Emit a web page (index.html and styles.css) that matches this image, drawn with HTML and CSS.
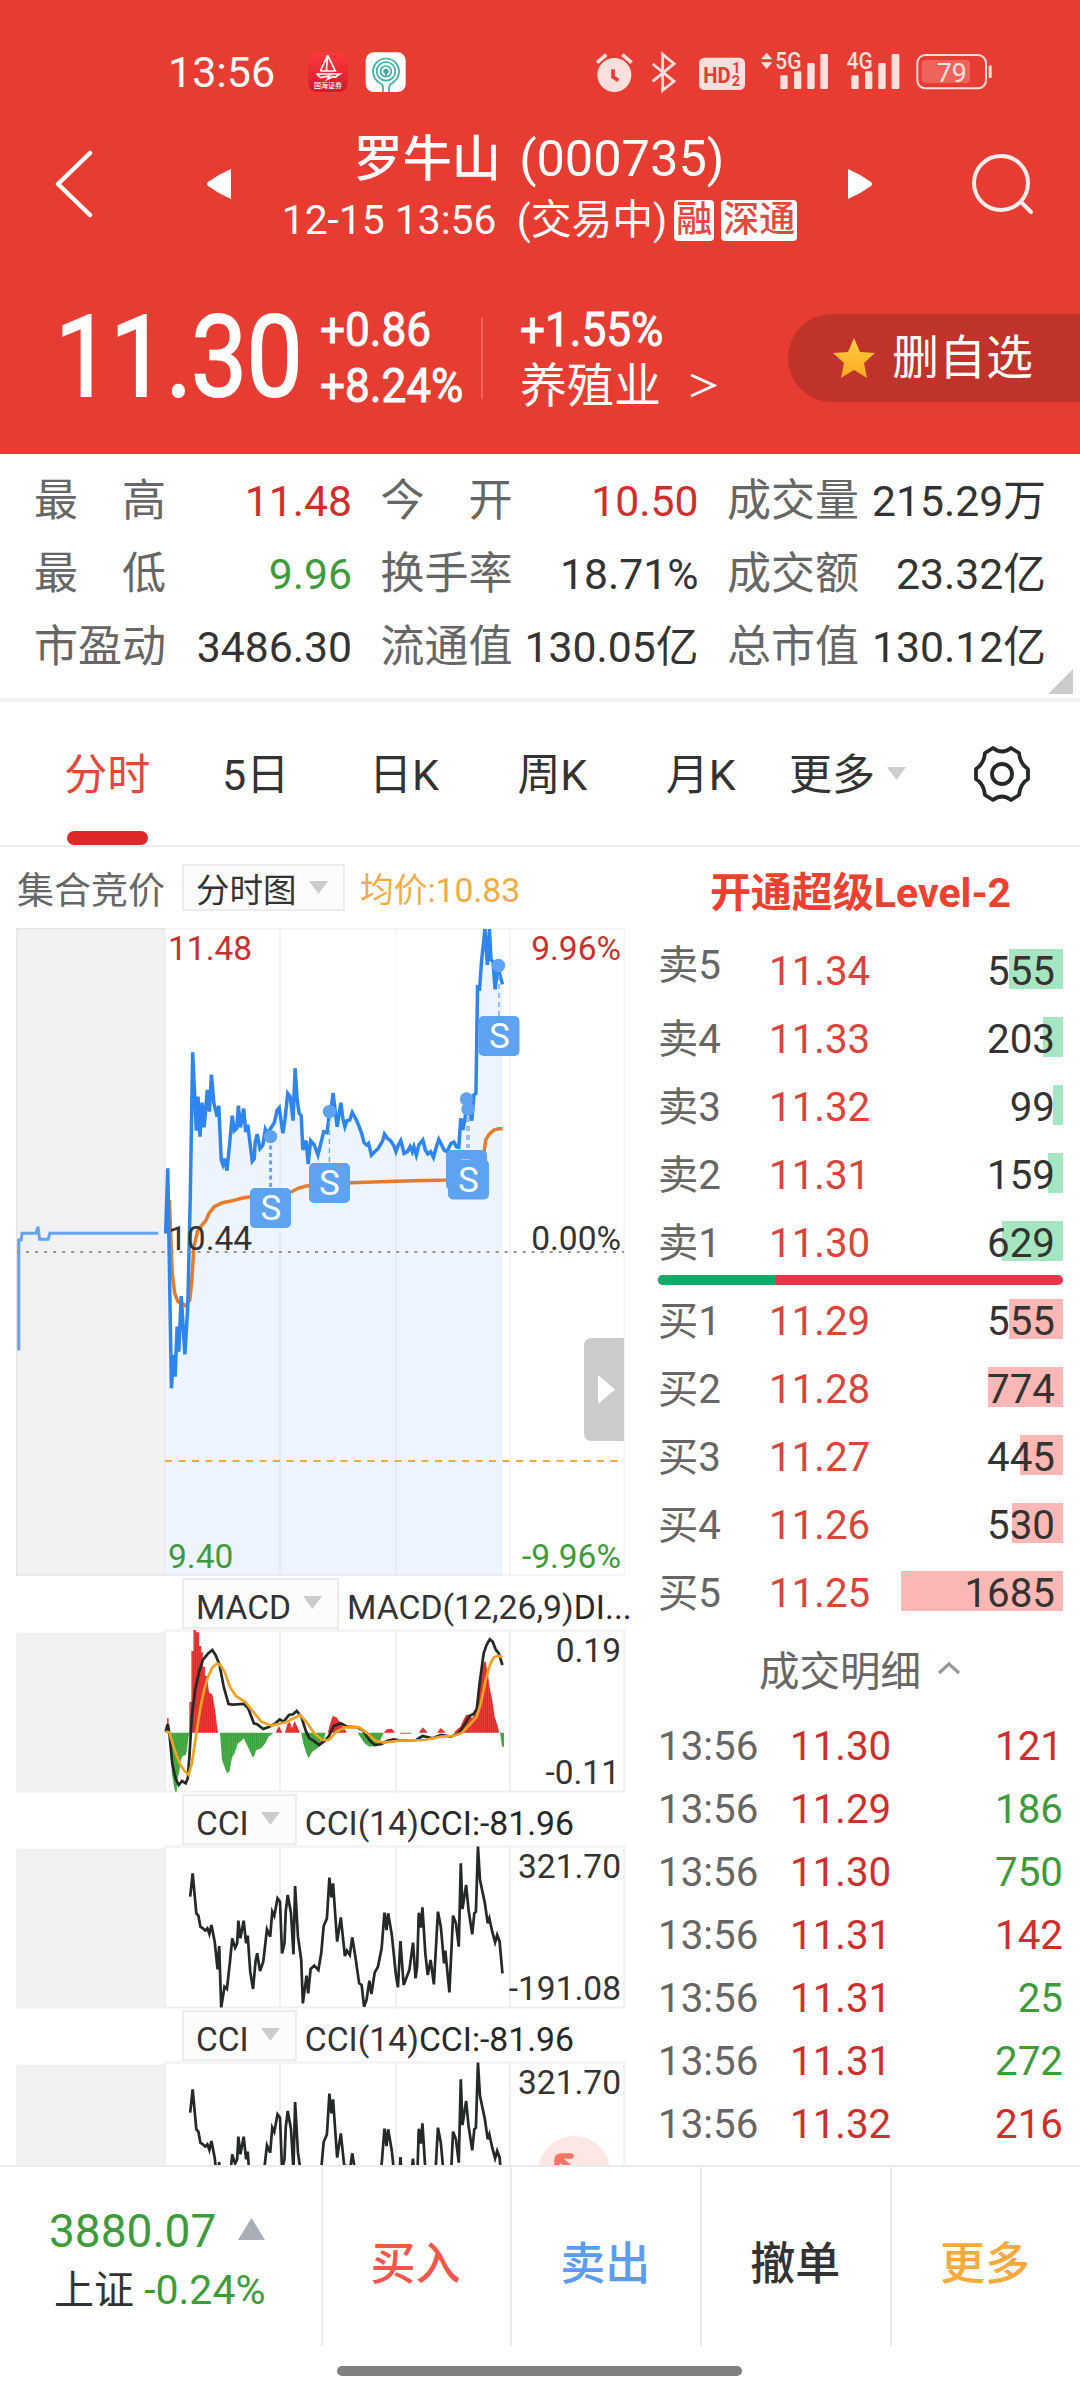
FILE: index.html
```html
<!DOCTYPE html>
<html lang="zh-CN">
<head>
<meta charset="utf-8">
<title>罗牛山 (000735)</title>
<link rel="stylesheet" href="styles.css">
</head>
<body>
<div class="screen">
  <header class="header">
    <div class="status">
      <span class="clock">13:56</span>
      <svg class="apps" viewBox="0 0 345 195" width="115" height="65">
        <defs><linearGradient id="app" x1="0" y1="0" x2="0" y2="1"><stop offset="0" stop-color="#fb3a3c"/><stop offset="1" stop-color="#d8182c"/></linearGradient></defs>
        <rect x="25" y="37" width="118" height="119" rx="26" fill="url(#app)"/>
        <g fill="none" stroke="#fff" stroke-width="5"><path d="M83 46L61 93M83 46L106 93H61M83 46L79 93M48 102H120L108 110M52 104L62 113L88 108L82 118L98 110L110 112"/></g>
        <text x="84" y="145" text-anchor="middle" class="app-name">国海证券</text>
        <rect x="197" y="37" width="120" height="119" rx="24" fill="#fff"/>
        <g fill="none" stroke="#37b0a4" stroke-width="5"><path d="M249 156V142Q249 134 238 128A39 39 0 1 1 278 128Q267 134 267 142V156"/><circle cx="258" cy="94" r="28"/><circle cx="258" cy="94" r="16"/><path d="M258 100V111"/></g>
        <circle cx="258" cy="94" r="8" fill="#37b0a4"/>
      </svg>
      <svg class="signals" viewBox="0 0 1260 195" width="420" height="65">
        <g fill="#fde0de">
          <circle cx="88" cy="105" r="51"/>
          <rect x="342" y="53" width="138" height="97" rx="16"/>
          <path d="M528 58L545 38L562 58zM528 67L545 87L562 67z"/>
          <rect x="586" y="106" width="22" height="41" rx="4"/><rect x="627" y="94" width="22" height="53" rx="4"/><rect x="667" y="69" width="22" height="78" rx="4"/><rect x="706" y="42" width="23" height="105" rx="4"/>
          <rect x="799" y="106" width="22" height="41" rx="4"/><rect x="840" y="94" width="22" height="53" rx="4"/><rect x="880" y="69" width="22" height="78" rx="4"/><rect x="920" y="42" width="23" height="105" rx="4"/>
          <rect x="1211" y="76" width="9" height="38" rx="4"/>
        </g>
        <g fill="none" stroke="#fde0de">
          <path d="M36 68L64 44M140 68L112 44" stroke-width="11"/>
          <path d="M203 72L267 124L233 151V43L267 71L203 124" stroke-width="8.500"/>
          <rect x="997" y="45" width="206" height="100" rx="24" stroke-width="6"/>
        </g>
        <rect x="1010" y="60" width="145" height="69" rx="12" fill="#ee645b"/>
        <path d="M84 88V111L100 121" fill="none" stroke="#e63c32" stroke-width="11"/>
        <g class="sig-text">
          <text x="355" y="129" textLength="82" lengthAdjust="spacingAndGlyphs" class="hd">HD</text>
          <text x="442" y="98" class="hd-num">1</text><text x="440" y="138" class="hd-num">2</text>
          <text x="571" y="88" textLength="78" lengthAdjust="spacingAndGlyphs" class="net">5G</text>
          <text x="785" y="88" textLength="78" lengthAdjust="spacingAndGlyphs" class="net">4G</text>
          <text x="1055" y="125" class="battery">79</text>
        </g>
      </svg>
    </div>
    <div class="nav">
      <svg class="back" viewBox="0 0 40 68" width="40" height="68"><path d="M37 3L5 34L37 65" fill="none" stroke="#fff" stroke-width="4.5" stroke-linecap="round" stroke-linejoin="round"/></svg>
      <svg class="prev" viewBox="0 0 26 32" width="26" height="32"><path d="M25 1V31Q13 26 2 18Q0 16 2 14Q13 6 25 1z" fill="#fff"/></svg>
      <div class="title">
        <div class="name"><b>罗牛山</b> (000735)</div>
        <div class="sub"><span>12-15 13:56&nbsp; (交易中)</span><i>融</i><i>深通</i></div>
      </div>
      <svg class="next" viewBox="0 0 26 32" width="26" height="32"><path d="M1 1V31Q13 26 24 18Q26 16 24 14Q13 6 1 1z" fill="#fff"/></svg>
      <svg class="search" viewBox="0 0 64 64" width="64" height="64"><g fill="none" stroke="#fff" stroke-opacity=".9" stroke-width="4" stroke-linecap="round"><circle cx="30" cy="31" r="27"/><path d="M50 50L60 60"/></g></svg>
    </div>
    <div class="quote">
      <div class="price"><span>11.30</span></div>
      <div class="delta"><span>+0.86</span><span>+8.24%</span></div>
      <div class="sector"><span class="narrow">+1.55%</span><span>养殖业</span></div>
      <svg class="chev" viewBox="0 0 28 28" width="28" height="28"><path d="M2 3L25 13.500L2 24" fill="none" stroke="#fff" stroke-width="3"/></svg>
      <div class="fav">
        <svg viewBox="0 0 44 42" width="44" height="42"><defs><linearGradient id="star" x1="0" y1="0" x2="0" y2="1"><stop offset="0" stop-color="#fdd045"/><stop offset="1" stop-color="#fca81e"/></linearGradient></defs><path d="M22 1L28 15L43 16L32 26L35 41L22 33L9 41L12 26L1 16L16 15z" fill="url(#star)"/></svg>
        <span>删自选</span>
      </div>
    </div>
  </header>

  <section class="stats">
    <div class="stat"><span class="spread"><i>最</i><i>高</i></span><b class="red">11.48</b></div>
    <div class="stat"><span class="spread"><i>今</i><i>开</i></span><b class="red">10.50</b></div>
    <div class="stat"><span>成交量</span><b>215.29万</b></div>
    <div class="stat"><span class="spread"><i>最</i><i>低</i></span><b class="green">9.96</b></div>
    <div class="stat"><span>换手率</span><b>18.71%</b></div>
    <div class="stat"><span>成交额</span><b>23.32亿</b></div>
    <div class="stat"><span>市盈动</span><b>3486.30</b></div>
    <div class="stat"><span>流通值</span><b>130.05亿</b></div>
    <div class="stat"><span>总市值</span><b>130.12亿</b></div>
    <svg class="corner" viewBox="0 0 26 26" width="26" height="26"><path d="M25 0V25H0z" fill="#ccc"/></svg>
  </section>

  <nav class="tabs">
    <span class="tab active">分时</span><span class="tab">5日</span><span class="tab">日K</span><span class="tab">周K</span><span class="tab">月K</span>
    <span class="tab more">更多<svg viewBox="0 0 19 13" width="19" height="13"><path d="M0 0H19L9.500 13z" fill="#ccc"/></svg></span>
    <svg class="gear" viewBox="0 0 58 58" width="58" height="58"><g fill="none" stroke="#262828" stroke-width="3.800" stroke-linejoin="round"><path d="M20 3Q29 10 38 3L46 8Q47 19 55 24V34Q47 39 46 50L38 55Q29 48 20 55L12 50Q11 39 3 34V24Q11 19 12 8z"/><circle cx="29" cy="29" r="10"/></g></svg>
  </nav>

  <main class="main">
    <div class="charts">
      <div class="chart-head">
        <span class="auction">集合竞价</span>
        <span class="select">分时图<svg viewBox="0 0 19 13" width="19" height="13"><path d="M0 0H19L9.500 13z" fill="#ccc"/></svg></span>
        <span class="avg">均价:10.83</span>
      </div>
      <div class="pane price-pane">
        <svg viewBox="0 0 610 648" width="610" height="648">
          <rect x="0" y="0" width="149" height="648" fill="#f1f1f1"/>
          <g transform="translate(-16 -78) scale(.408163 .333333)">
            <path d="M406 1150L411 955L420 1615L425 1515L429 1580L434 1430L438 1505L444 1338L453 1513L460 1370L466 1050L472 607L481 842L485 740L490 860L495 758L500 832L508 720L513 785L518 674L524 760L532 800L536 767L542 930L546 944L550 926L556 962L563 875L569 797L574 842L580 835L584 767L589 832L597 776L602 846L607 824L618 934L623 926L625 880L630 852L637 896L644 885L650 838L655 850L667 828L672 818L679 780L684 773L693 850L698 810L705 730L711 740L718 812L723 655L728 750L733 790L738 797L742 900L750 872L755 942L761 872L770 885L779 915L787 875L793 845L801 848L807 790L812 770L816 730L826 830L835 758L840 805L845 830L850 812L857 810L863 787L874 812L880 830L886 850L892 878L898 885L903 880L910 915L920 903L926 896L933 882L938 870L942 852L950 866L957 872L964 885L970 905L976 885L982 872L990 910L998 905L1005 890L1010 905L1014 890L1020 915L1026 885L1036 870L1042 900L1048 912L1055 905L1062 922L1068 895L1075 868L1082 885L1088 900L1095 905L1105 880L1112 876L1118 890L1124 892L1129 805L1134 840L1140 800L1143 750L1150 780L1156 812L1161 735L1166 730L1170 412L1175 415L1180 330L1185 275L1188 237L1194 345L1199 237L1203 330L1208 335L1213 418L1220 345L1224 370L1231 403V2177H406z" fill="#edf4fe"/>
            <g class="plot">
              <polyline stroke="#e87b28" stroke-width="3.500" points="408,1150 415,1050 422,1270 428,1330 436,1355 445,1360 455,1368 465,1350 470,1290 475,1190 485,1140 492,1130 505,1110 512,1090 525,1070 545,1058 570,1052 595,1044 625,1038 690,1032 715,1025 730,1015 750,1008 800,1003 860,998 970,994 1095,990 1150,985 1180,960 1186,905 1190,870 1198,853 1210,840 1222,836 1231,836"/>
              <polyline stroke="#2e85ee" stroke-width="3.500" points="406,1150 411,955 420,1615 425,1515 429,1580 434,1430 438,1505 444,1338 453,1513 460,1370 466,1050 472,607 481,842 485,740 490,860 495,758 500,832 508,720 513,785 518,674 524,760 532,800 536,767 542,930 546,944 550,926 556,962 563,875 569,797 574,842 580,835 584,767 589,832 597,776 602,846 607,824 618,934 623,926 625,880 630,852 637,896 644,885 650,838 655,850 667,828 672,818 679,780 684,773 693,850 698,810 705,730 711,740 718,812 723,655 728,750 733,790 738,797 742,900 750,872 755,942 761,872 770,885 779,915 787,875 793,845 801,848 807,790 812,770 816,730 826,830 835,758 840,805 845,830 850,812 857,810 863,787 874,812 880,830 886,850 892,878 898,885 903,880 910,915 920,903 926,896 933,882 938,870 942,852 950,866 957,872 964,885 970,905 976,885 982,872 990,910 998,905 1005,890 1010,905 1014,890 1020,915 1026,885 1036,870 1042,900 1048,912 1055,905 1062,922 1068,895 1075,868 1082,885 1088,900 1095,905 1105,880 1112,876 1118,890 1124,892 1129,805 1134,840 1140,800 1143,750 1150,780 1156,812 1161,735 1166,730 1170,412 1175,415 1180,330 1185,275 1188,237 1194,345 1199,237 1203,330 1208,335 1213,418 1220,345 1224,370 1231,403"/>
              <polyline stroke="#64a3ef" stroke-width="3" points="43,1497 46,1497 46,1170 52,1170 54,1150 88,1150 93,1130 97,1168 118,1168 122,1150 388,1150"/>
            </g>
          </g>
          <g fill="none" stroke="#2f3a50" stroke-opacity=".06" stroke-width="1.500"><path d="M.700 .700H608.300V647H.700zM149 0V648M264 0V648M380 0V648M494 0V648"/></g>
          <path d="M1 324H608" stroke="#949494" stroke-width="2" stroke-dasharray="3 6.030"/>
          <path d="M149 533H608" stroke="#f5a83c" stroke-width="2" stroke-dasharray="7 6.500"/>
          <g stroke="#64a3ef" stroke-width="1.300" stroke-dasharray="5 4"><path d="M313.400 184V235M451 171V220M453 180V220M483 38V88"/><path d="M254.600 210V260" stroke-width="3" stroke-dasharray="4 3.500"/></g>
          <g fill="#5ea2f2">
            <circle cx="254.600" cy="208.600" r="6.700"/><circle cx="313.400" cy="183.600" r="6.700"/><circle cx="450.500" cy="171" r="6.700"/><circle cx="452" cy="181" r="6.700"/><circle cx="482.500" cy="37.500" r="6.700"/>
            <rect x="234" y="260" width="41" height="40" rx="5"/><rect x="293" y="235" width="41" height="40" rx="5"/><rect x="430" y="222" width="41" height="40" rx="5"/><rect x="432" y="231.500" width="41" height="40" rx="5"/><rect x="462.500" y="88" width="41" height="40" rx="5"/>
          </g>
          <path d="M445 231.500H454" stroke="#a5c9f8" stroke-width="1"/>
          <g class="mark"><text x="254.800" y="292">S</text><text x="313.500" y="267">S</text><text x="452.500" y="264">S</text><text x="483.300" y="120">S</text></g>
          <g class="axis"><text x="152" y="32" fill="#c9302c">11.48</text><text x="152" y="322">10.44</text><text x="152" y="640" fill="#3e9b3c">9.40</text></g>
          <g class="axis end"><text x="605" y="32" fill="#c9302c">9.96%</text><text x="605" y="322">0.00%</text><text x="605" y="640" fill="#3e9b3c">-9.96%</text></g>
          <path d="M608 410H576Q568 410 568 418V505Q568 513 576 513H608z" fill="#cbcbcb"/>
          <path d="M582 447L599 461.500L582 476z" fill="#fff"/>
        </svg>
      </div>

      <div class="ind-head"><span class="select">MACD<svg viewBox="0 0 19 13" width="19" height="13"><path d="M0 0H19L9.500 13z" fill="#ccc"/></svg></span><span class="ind-text">MACD(12,26,9)<b>DI...</b></span></div>
      <div class="pane">
        <svg viewBox="0 0 610 164" width="610" height="164">
          <defs>
            <pattern id="rise" width="4.680" height="20" patternUnits="userSpaceOnUse"><rect width="4.680" height="20" fill="#ee5550"/><rect width="3.200" height="20" fill="#e02222"/></pattern>
            <pattern id="fall" width="4.680" height="20" patternUnits="userSpaceOnUse"><rect width="4.680" height="20" fill="#6ab868"/><rect width="3.200" height="20" fill="#31a031"/></pattern>
          </defs>
          <rect x="0" y="4" width="149" height="159" fill="#f1f1f1"/>
          <path class="grid" d="M149 1.500H608.300V162.500H0V4.700H149M149 0V164M264 0V164M380 0V164M494 0V164"/>
          <g transform="translate(-16 -59) scale(.408163 .333333)">
            <path fill="url(#rise)" d="M409 488V445H413V488zM464 488V395H469V243H474V180H480V187H488V228H493V247H497V290H502V318H507L512 368L520 372L525 405L529 437L532 475L535 488zM675 488L683 468L692 488zM698 488L704 462L710 455L715 475L722 452L728 470L735 488zM803 488L808 465L815 438L824 442L832 455L840 470L850 488zM940 488L948 478L960 476L968 488zM1026 488L1036 472L1048 488zM1070 488L1080 474L1092 488zM1112 488L1120 478L1128 470L1135 450L1142 435H1150L1157 445L1163 430L1168 400L1173 360L1178 310L1186 275H1190L1196 318L1200 355L1206 390L1212 440L1218 462L1222 482L1224 488z"/>
            <path fill="url(#fall)" d="M414 488L418 545L421 610L425 640L429 665H433L434 635L440 600L442 575L447 558L455 555L458 540L462 500L466 488zM539 488L544 570L550 590L556 610L562 605L568 565L575 548L583 520L592 512L597 505L603 520L611 540L618 560H622L628 540L640 535L650 520L658 500L670 488zM738 488L743 520L750 548L756 565L765 545L778 535L790 520L798 488zM876 488L885 505L893 520L905 530L918 528L930 515L940 488zM980 488V491H1008V488zM1225 488L1227 505L1230 530H1235V488z"/>
            <g class="plot">
              <polyline stroke="#262828" stroke-width="2.700" points="406,485 411,462 415,490 422,580 430,625 438,645 446,633 455,640 460,625 464,560 470,440 478,360 488,305 497,270 510,250 520,240 528,255 538,285 548,350 560,402 570,404 598,402 608,415 622,460 630,463 645,477 660,470 675,460 685,448 695,455 708,435 718,433 727,423 738,440 750,485 758,505 768,512 782,525 795,513 805,500 818,468 835,460 850,470 875,472 890,482 905,510 918,525 935,522 950,512 965,508 980,512 1020,510 1035,498 1060,505 1080,495 1105,500 1125,488 1140,460 1150,438 1160,432 1168,418 1175,340 1185,250 1192,225 1200,208 1207,215 1215,240 1222,250 1231,285"/>
              <polyline stroke="#eda224" stroke-width="2.700" points="406,485 415,487 425,530 440,580 450,600 462,615 470,580 480,500 490,420 500,360 510,320 520,293 532,280 540,285 550,305 563,350 578,378 602,397 620,425 640,455 665,467 700,457 735,435 750,455 770,490 790,510 805,510 825,485 845,472 880,472 900,490 920,512 940,518 980,512 1040,510 1080,500 1110,498 1130,490 1150,465 1168,440 1178,400 1190,330 1200,285 1210,262 1220,257 1231,262"/>
            </g>
          </g>
          <g class="axis end"><text x="605" y="33">0.19</text><text x="604" y="155">-0.11</text></g>
        </svg>
      </div>

      <div class="ind-head"><span class="select">CCI<svg viewBox="0 0 19 13" width="19" height="13"><path d="M0 0H19L9.500 13z" fill="#ccc"/></svg></span><span class="ind-text">CCI(14)<b>CCI:-81.96</b></span></div>
      <div class="pane">
        <svg viewBox="0 0 610 164" width="610" height="164">
          <defs>
            <g id="cci">
              <rect x="0" y="4" width="149" height="159" fill="#f1f1f1"/>
              <path class="grid" d="M149 1.500H608.300V162.500H0V4.700H149M149 0V164M264 0V164M380 0V164M494 0V164"/>
              <g class="plot" transform="translate(-16 -25) scale(.408163 .333333)">
                <polyline stroke="#262828" stroke-width="2.700" points="466,230 472,160 481,280 486,287 491,320 497,325 503,332 508,325 513,342 518,315 526,365 533,448 537,378 542,562 550,500 556,507 563,430 569,355 576,383 581,370 584,302 589,355 597,302 603,370 607,347 613,455 620,507 626,425 630,400 637,453 645,425 654,328 662,350 667,275 672,288 680,235 686,245 691,400 697,370 700,275 705,225 713,280 719,403 723,198 730,350 738,420 742,550 751,467 755,520 761,447 770,437 780,450 787,400 793,318 801,295 807,173 812,232 816,190 826,365 835,292 845,408 850,392 857,405 863,352 870,405 880,490 886,495 892,560 898,540 905,482 910,522 918,458 926,440 935,385 942,278 947,330 951,280 960,345 970,465 975,502 981,363 989,495 1003,450 1012,368 1018,475 1022,440 1026,278 1031,323 1035,262 1042,400 1048,465 1055,420 1063,493 1073,275 1080,320 1088,430 1091,392 1101,517 1110,287 1117,310 1124,380 1129,130 1133,267 1142,195 1148,270 1157,343 1162,280 1166,275 1171,80 1176,180 1188,250 1195,310 1199,295 1206,335 1213,367 1218,345 1224,365 1231,460"/>
              </g>
            </g>
          </defs>
          <use href="#cci"/>
          <g class="axis end"><text x="605" y="33">321.70</text><text x="605" y="155">-191.08</text></g>
        </svg>
      </div>

      <div class="ind-head"><span class="select">CCI<svg viewBox="0 0 19 13" width="19" height="13"><path d="M0 0H19L9.500 13z" fill="#ccc"/></svg></span><span class="ind-text">CCI(14)<b>CCI:-81.96</b></span></div>
      <div class="pane">
        <svg viewBox="0 0 610 104" width="610" height="104">
          <use href="#cci"/>
          <g class="axis end"><text x="605" y="33">321.70</text></g>
          <circle cx="558" cy="111" r="36" fill="#fde7e4"/>
          <path d="M541 107V99Q541 95 545 95H555M546 100L556 108" fill="none" stroke="#fb7468" stroke-width="5.500" stroke-linecap="round"/>
        </svg>
      </div>
    </div>

    <aside class="book">
      <div class="level2">开通超级Level-2</div>
      <div class="depth sell">
        <div class="lv"><span>卖5</span><b>11.34</b><em>555<i style="width:54px"></i></em></div>
        <div class="lv"><span>卖4</span><b>11.33</b><em>203<i style="width:20px"></i></em></div>
        <div class="lv"><span>卖3</span><b>11.32</b><em>99<i style="width:10px"></i></em></div>
        <div class="lv"><span>卖2</span><b>11.31</b><em>159<i style="width:15px"></i></em></div>
        <div class="lv"><span>卖1</span><b>11.30</b><em>629<i style="width:61px"></i></em></div>
      </div>
      <div class="ratio"><i style="width:29.200%"></i></div>
      <div class="depth buy">
        <div class="lv"><span>买1</span><b>11.29</b><em>555<i style="width:54px"></i></em></div>
        <div class="lv"><span>买2</span><b>11.28</b><em>774<i style="width:75px"></i></em></div>
        <div class="lv"><span>买3</span><b>11.27</b><em>445<i style="width:43px"></i></em></div>
        <div class="lv"><span>买4</span><b>11.26</b><em>530<i style="width:51px"></i></em></div>
        <div class="lv"><span>买5</span><b>11.25</b><em>1685<i style="width:162px"></i></em></div>
      </div>
      <div class="detail">成交明细<svg viewBox="0 0 24 16" width="24" height="16"><path d="M2 13L12 4L22 13" fill="none" stroke="#999" stroke-width="3.200"/></svg></div>
      <div class="trade"><span>13:56</span><b>11.30</b><em class="red">121</em></div>
      <div class="trade"><span>13:56</span><b>11.29</b><em class="green">186</em></div>
      <div class="trade"><span>13:56</span><b>11.30</b><em class="green">750</em></div>
      <div class="trade"><span>13:56</span><b>11.31</b><em class="red">142</em></div>
      <div class="trade"><span>13:56</span><b>11.31</b><em class="green">25</em></div>
      <div class="trade"><span>13:56</span><b>11.31</b><em class="green">272</em></div>
      <div class="trade"><span>13:56</span><b>11.32</b><em class="red">216</em></div>
    </aside>
  </main>

  <footer class="footer">
    <div class="actions">
      <div class="index">
        <div class="idx-top">3880.07<svg viewBox="0 0 27 22" width="27" height="22"><path d="M13.500 0L27 22H0z" fill="#a9adb5"/></svg></div>
        <div class="idx-sub"><span>上证</span> -0.24%</div>
      </div>
      <div class="act buy-act">买入</div>
      <div class="act sell-act">卖出</div>
      <div class="act">撤单</div>
      <div class="act more-act">更多</div>
    </div>
    <div class="home"></div>
  </footer>
</div>
</body>
</html>
```
FILE: styles.css
```css
* { box-sizing: border-box; }
body { margin: 0; background: #fff; font-family: Roboto, "Noto Sans CJK SC", sans-serif; color: #333; }
b, i, em { font-weight: 400; font-style: normal; }
svg { display: block; flex: none; overflow: hidden; }
.screen { width: 1080px; height: 2400px; overflow: hidden; display: flex; flex-direction: column; }
.red { color: #cf2e2c; }
.green { color: #3e9b3c; }

/* header */
.header { height: 454px; background: #e63c32; color: #fff; flex: none; }
.status { height: 105px; padding: 40px 0 0 168px; display: flex; align-items: center; }
.clock { width: 132px; font-size: 43px; line-height: 65px; }
.apps { margin-right: 170px; }
.app-name { font-size: 21px; fill: #fff; font-weight: 500; }
.sig-text { font-family: Roboto, sans-serif; fill: #fde0de; }
.sig-text .hd { font-size: 68px; font-weight: 700; fill: #e63c32; }
.sig-text .hd-num { font-size: 43px; font-weight: 700; fill: #e63c32; }
.sig-text .net { font-size: 70px; font-weight: 500; }
.sig-text .battery { font-size: 80px; }
.nav { height: 145px; display: flex; }
.back { margin: 45px 0 0 53px; }
.prev { margin: 63px 0 0 113px; }
.title { width: 614px; margin-top: 22px; display: flex; flex-direction: column; align-items: center; white-space: nowrap; }
.name { font-size: 50.500px; line-height: 63px; word-spacing: 6px; }
.name b { font-weight: 500; font-size: 49px; }
.sub { font-size: 40.800px; line-height: 58px; display: flex; align-items: center; padding-left: 1px; }
.sub i { background: #fff; color: #e04a40; font-size: 36px; font-weight: 500; line-height: 41px; height: 41px; border-radius: 4px; padding: 0 2px; margin-left: 7px; }
.next { margin: 63px 0 0 1px; }
.search { margin: 47px 0 0 98px; }
.quote { height: 204px; padding: 12px 0 0 55px; display: flex; align-items: center; }
.price { width: 265px; font-size: 113px; -webkit-text-stroke: 2px #fff; line-height: 120px; }
.price span, .delta span, .narrow { display: block; transform-origin: 0 50%; white-space: nowrap; }
.price span { transform: scaleX(.885); letter-spacing: -1px; }
.delta { width: 163px; height: 81px; border-right: 2px solid #ec645b; display: flex; flex-direction: column; justify-content: center; font-size: 49px; line-height: 56px; -webkit-text-stroke: 1px #fff; }
.delta span, .narrow { transform: scaleX(.9); }
.sector { width: 164px; margin-left: 37px; font-size: 47px; line-height: 56px; }
.narrow { font-size: 49px; -webkit-text-stroke: 1px #fff; }
.chev { margin: 56px 0 0 5px; }
.fav { margin-left: auto; width: 292px; height: 88px; border-radius: 44px 0 0 44px; background: #c0332b; display: flex; align-items: center; padding-left: 44px; gap: 16px; font-size: 47px; line-height: 88px; }

/* key figures */
.stats { position: relative; height: 248px; flex: none; border-bottom: 4px solid #f0f0f0; padding: 11px 34px 0 34px; display: grid; grid-template-columns: 318px 318px 319px; column-gap: 28.500px; grid-auto-rows: 73px; font-size: 42.700px; line-height: 73px; white-space: nowrap; }
.stat { display: flex; justify-content: space-between; }
.stat span { width: 132px; font-size: 44px; color: #666; }
.spread { display: flex; justify-content: space-between; }
.corner { position: absolute; right: 6px; bottom: 3px; }

/* period tabs */
.tabs { height: 145px; flex: none; border-bottom: 2px solid #ececec; padding-left: 33px; display: flex; align-items: center; font-size: 43px; }
.tab { position: relative; width: 148.400px; height: 143px; line-height: 147px; text-align: center; }
.tab.active { color: #e2473c; }
.tab.active::after { content: ""; position: absolute; left: 34px; bottom: 0; width: 81px; height: 14px; border-radius: 7px; background: #e0282a; }
.tab.more { width: 178px; margin-left: 4px; padding: 4px 0 0 10px; display: flex; align-items: center; gap: 12px; }
.more svg { margin-top: -4px; }
.gear { margin-left: 16px; }

/* charts */
.main { height: 1318px; flex: none; display: flex; overflow: hidden; }
.charts { width: 640px; flex: none; }
.chart-head { height: 81px; padding: 0 0 0 17px; display: flex; align-items: center; font-size: 34px; white-space: nowrap; }
.auction { width: 165px; font-size: 37px; color: #666; }
.select { height: 47px; border: 2px solid #ececec; background: #fcfcfc; display: flex; align-items: center; padding: 0 15px 0 12px; font-size: 33.500px; }
.select svg { margin-left: 12px; }
.chart-head .select { width: 163px; }
.avg { margin-left: 15px; color: #f1ab48; font-size: 33.700px; }
.pane { height: 164px; padding-left: 16px; }
.price-pane { height: 649px; }
.pane svg { font-family: Roboto, sans-serif; }
.plot polyline { fill: none; vector-effect: non-scaling-stroke; }
.grid { fill: none; stroke: #f0f0f0; stroke-width: 2; }
.axis { font-size: 33.500px; fill: #333; }
.end { text-anchor: end; }
.mark { font-size: 35px; fill: #fff; text-anchor: middle; }
.ind-head { height: 52px; padding-left: 182px; display: flex; align-items: center; font-size: 33.700px; white-space: nowrap; }
.ind-head .select { height: 51px; padding-top: 8px; }
.ind-head .select svg { margin-top: -10px; }
.ind-text { margin-left: 8px; padding-top: 8px; }
.ind-text b { color: #262626; }

/* order book */
.book { width: 440px; padding: 0 17px 0 18px; font-size: 40.300px; white-space: nowrap; }
.level2 { height: 90px; line-height: 92px; text-align: center; font-weight: 700; font-size: 41px; color: #ee4030; }
.lv { height: 68px; line-height: 70px; display: grid; grid-template-columns: 111px 120px 1fr; }
.lv span { color: #666; }
.sell .lv:first-child span { margin-top: -6px; }
.lv b { color: #d8453a; }
.lv em { position: relative; text-align: right; padding-right: 8px; z-index: 0; }
.lv em i { position: absolute; z-index: -1; right: 0; top: 12px; height: 40px; }
.sell i { background: #a5e6c0; }
.buy i { background: #fdb7b5; }
.ratio { height: 10px; margin: -2px 0 2px; border-radius: 5px; background: #e8344a; overflow: hidden; }
.ratio i { display: block; height: 10px; background: #0aac68; }
.detail { height: 88px; padding-bottom: 6px; padding-left: 101px; display: flex; align-items: center; gap: 16px; font-size: 40.500px; color: #666; }
.detail svg { margin-top: 0; }
.trade { height: 63px; line-height: 63px; display: grid; grid-template-columns: 132px 120px 1fr; }
.trade span { color: #666; }
.trade b { color: #cf2e2c; }
.trade em { text-align: right; }

/* bottom bar */
.footer { height: 235px; flex: none; border-top: 2px solid #ebebeb; background: #fff; }
.actions { height: 179px; display: grid; grid-template-columns: 320.500px repeat(4, 1fr); grid-template-rows: 179px; }
.index { padding: 31px 0 0 49px; }
.idx-top { display: flex; align-items: center; gap: 22px; font-size: 46px; line-height: 66px; color: #3e9b3c; }
.idx-top svg { margin-top: -4px; }
.idx-sub { font-size: 41px; line-height: 53px; color: #3e9b3c; padding-left: 5px; }
.idx-sub span { color: #333; font-size: 40px; }
.act { display: flex; align-items: center; justify-content: center; padding: 8px 2px 0 0; border-left: 2px solid #ebebeb; font-size: 45px; font-weight: 500; color: #333; }
.buy-act { color: #f4564b; }
.sell-act { color: #5a9df0; }
.more-act { color: #f7a93e; }
.home { width: 405px; height: 10px; margin: 20px 0 0 337px; border-radius: 5px; background: #808080; }
```
